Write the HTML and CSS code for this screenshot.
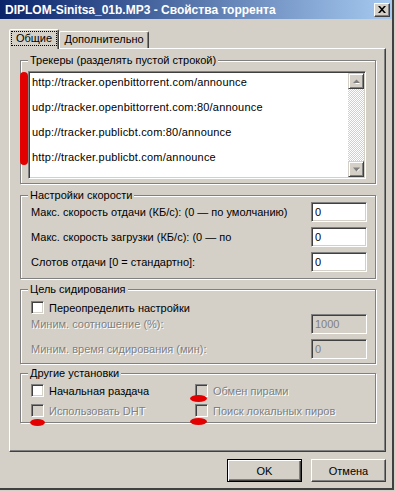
FILE: index.html
```html
<!DOCTYPE html>
<html lang="ru">
<head>
    <meta charset="UTF-8">
    <title>DIPLOM-Sinitsa_01b.MP3 - Свойства торрента</title>
    <link rel="stylesheet" href="styles.css">
</head>
<body>

<div class="window">
    <div class="titlebar">
        <span class="title">DIPLOM-Sinitsa_01b.MP3 - Свойства торрента</span>
        <button class="close">
            <svg width="8" height="7" viewBox="0 0 8 7">
                <path d="M0 0h2l2 2.3L6 0h2L5 3.5 8 7H6L4 4.7 2 7H0l3-3.5z" fill="#000"/>
            </svg>
        </button>
    </div>

    <div class="content">
        <div class="tabs">
            <div class="tab active"><span class="focus">Общие</span></div>
            <div class="tab">Дополнительно</div>
        </div>

        <div class="panel">
            <div class="group trackers">
                <div class="legend">Трекеры (разделять пустой строкой)</div>
                <div class="listbox">
                    <div class="lines">
                        <div class="line">http://tracker.openbittorrent.com/announce</div>
                        <div class="line">udp://tracker.openbittorrent.com:80/announce</div>
                        <div class="line">udp://tracker.publicbt.com:80/announce</div>
                        <div class="line">http://tracker.publicbt.com/announce</div>
                    </div>
                    <div class="scrollbar">
                        <div class="arrow">
                            <svg width="7" height="5" viewBox="0 0 7 5"><path d="M1 4h5L3.5 1.5z" fill="#fff" transform="translate(1 1)"/><path d="M0 4h7L3.5 0.5z" fill="#808080"/></svg>
                        </div>
                        <div class="track"></div>
                        <div class="arrow">
                            <svg width="7" height="5" viewBox="0 0 7 5"><path d="M1 1h5L3.5 3.5z" fill="#fff" transform="translate(1 1)"/><path d="M0 0.5h7L3.5 4.5z" fill="#808080"/></svg>
                        </div>
                    </div>
                </div>
            </div>

            <div class="group speed">
                <div class="legend">Настройки скорости</div>
                <div class="row">
                    <span>Макс. скорость отдачи (КБ/с): (0 — по умолчанию)</span>
                    <input class="field" type="text" value="0">
                </div>
                <div class="row">
                    <span>Макс. скорость загрузки (КБ/с): (0 — по</span>
                    <input class="field" type="text" value="0">
                </div>
                <div class="row">
                    <span>Слотов отдачи [0 = стандартно]:</span>
                    <input class="field" type="text" value="0">
                </div>
            </div>

            <div class="group seeding">
                <div class="legend">Цель сидирования</div>
                <div class="check-row first">
                    <span class="check"></span>
                    <span>Переопределить настройки</span>
                </div>
                <div class="row tight">
                    <span class="disabled">Миним. соотношение (%):</span>
                    <input class="field off" type="text" value="1000" disabled>
                </div>
                <div class="row">
                    <span class="disabled">Миним. время сидирования (мин):</span>
                    <input class="field off" type="text" value="0" disabled>
                </div>
            </div>

            <div class="group other">
                <div class="legend">Другие установки</div>
                <div class="options">
                    <div class="check-row">
                        <span class="check"></span>
                        <span>Начальная раздача</span>
                    </div>
                    <div class="check-row">
                        <span class="check off"></span>
                        <span class="disabled">Обмен пирами</span>
                    </div>
                    <div class="check-row">
                        <span class="check off"></span>
                        <span class="disabled">Использовать DHT</span>
                    </div>
                    <div class="check-row">
                        <span class="check off"></span>
                        <span class="disabled">Поиск локальных пиров</span>
                    </div>
                </div>
            </div>
        </div>

        <div class="buttons">
            <button class="btn default">OK</button>
            <button class="btn">Отмена</button>
        </div>
    </div>

    <!-- red marker scribbles over the screenshot -->
    <div class="mark mark-bar"></div>
    <div class="mark mark-dht"></div>
    <div class="mark mark-peers"></div>
    <div class="mark mark-local"></div>
</div>

</body>
</html>
```

FILE: styles.css
```css
* {
    box-sizing: border-box;
}

body {
    margin: 0;
    background-color: #d4d0c8;
    font: 11px "Liberation Sans", Arial, sans-serif;
    color: #000;
}

.window {
    position: relative;
    width: 394px;
    height: 490px;
    border-right: 2px solid #404040;
    border-bottom: 2px solid #404040;
}

.titlebar {
    display: flex;
    justify-content: space-between;
    align-items: center;
    height: 19px;
    padding: 0 2px 0 5px;
    background: linear-gradient(to right, #0a246a, #a6caf0);
}

.title {
    color: #fff;
    font-size: 12px;
    font-weight: bold;
    white-space: nowrap;
}

.close {
    display: flex;
    justify-content: center;
    align-items: center;
    width: 16px;
    height: 14px;
    padding: 0;
    background-color: #d4d0c8;
    border: 1px solid;
    border-color: #fff #404040 #404040 #fff;
    box-shadow: inset -1px -1px 0 #808080;
}

.content {
    padding: 10px 0 0 9px;
}

/* tabs */
.tabs {
    display: flex;
    align-items: flex-end;
    height: 19px;
}

.tab {
    width: 90px;
    height: 17px;
    border: 1px solid;
    border-bottom: 0;
    border-color: #fff #404040 transparent #fff;
    border-radius: 2px 2px 0 0;
    box-shadow: inset -1px 0 0 #808080;
    text-align: center;
    line-height: 15px;
}

.tab.active {
    position: relative;
    z-index: 1;
    width: 50px;
    height: 20px;
    margin-bottom: -1px;
    padding-top: 1px;
    background-color: #d4d0c8;
}

.focus {
    display: inline-block;
    padding: 0 4px;
    border: 1px dotted #000;
    line-height: 13px;
}

.panel {
    width: 377px;
    height: 404px;
    padding: 0 9px 0 10px;
    border: 1px solid;
    border-color: #fff #404040 #404040 #fff;
    box-shadow: inset -1px -1px 0 #808080;
}

/* group boxes */
.group {
    padding: 0 8px 0 10px;
    border: 1px solid #808080;
    box-shadow: inset 1px 1px 0 #fff, 1px 1px 0 #fff;
}

.legend {
    width: fit-content;
    margin: -7px 0 0 -3px;
    padding: 0 2px;
    background-color: #d4d0c8;
    line-height: 13px;
}

.trackers {
    margin-top: 11px;
    padding-bottom: 4px;
}

.speed {
    margin-top: 11px;
    padding-bottom: 6px;
}

.seeding {
    margin-top: 10px;
    padding-bottom: 4px;
}

.other {
    margin-top: 9px;
    padding-bottom: 5px;
}

.listbox {
    display: flex;
    width: 338px;
    height: 108px;
    margin: 4px 0 0 -3px;
    border: 1px solid;
    border-color: #808080 #fff #fff #808080;
    box-shadow: inset 1px 1px 0 #404040, inset -1px -1px 0 #d4d0c8;
    background-color: #fff;
    padding: 1px;
}

.lines {
    flex: 1;
    padding: 3px 0 0 2px;
}

.line {
    line-height: 13px;
    margin-bottom: 12px;
    letter-spacing: 0.2px;
    white-space: nowrap;
}

.scrollbar {
    display: flex;
    flex-direction: column;
    width: 16px;
}

.arrow {
    display: flex;
    justify-content: center;
    align-items: center;
    height: 16px;
    background-color: #d4d0c8;
    border: 1px solid;
    border-color: #d4d0c8 #404040 #404040 #d4d0c8;
    box-shadow: inset 1px 1px 0 #fff, inset -1px -1px 0 #808080;
}

.track {
    flex: 1;
    background: repeating-conic-gradient(#fff 0 25%, #d4d0c8 0 50%) 0 0 / 2px 2px;
}

.row {
    display: flex;
    justify-content: space-between;
    align-items: center;
    height: 20px;
    white-space: nowrap;
}

.row + .row {
    margin-top: 5px;
}

.row.tight {
    margin-top: 0;
}

.field {
    width: 56px;
    height: 20px;
    padding: 0 3px;
    font: inherit;
    color: #000;
    border: 1px solid;
    border-color: #808080 #fff #fff #808080;
    box-shadow: inset 1px 1px 0 #404040, inset -1px -1px 0 #d4d0c8;
    background-color: #fff;
    outline: none;
}

.field.off {
    color: #808080;
    background-color: #d4d0c8;
}

.disabled {
    color: #808080;
    text-shadow: 1px 1px 0 #fff;
}

/* checkboxes */
.check-row {
    display: flex;
    align-items: center;
    gap: 5px;
    height: 13px;
    white-space: nowrap;
}

.check-row.first {
    margin-top: 5px;
}

.check {
    flex: none;
    width: 13px;
    height: 13px;
    border: 1px solid;
    border-color: #808080 #fff #fff #808080;
    box-shadow: inset 1px 1px 0 #404040, inset -1px -1px 0 #d4d0c8;
    background-color: #fff;
}

.check.off {
    background-color: #d4d0c8;
}

.options {
    display: grid;
    grid-template-columns: 164px auto;
    row-gap: 7px;
    margin-top: 4px;
}

/* buttons */
.buttons {
    display: flex;
    justify-content: flex-end;
    gap: 9px;
    width: 377px;
    margin-top: 7px;
}

.btn {
    width: 75px;
    height: 23px;
    padding: 0;
    font: inherit;
    color: #000;
    background-color: #d4d0c8;
    border: 1px solid;
    border-color: #fff #404040 #404040 #fff;
    box-shadow: inset -1px -1px 0 #808080;
}

.btn.default {
    border-color: #000;
    box-shadow: inset 1px 1px 0 #fff, inset -1px -1px 0 #404040, inset -2px -2px 0 #808080;
}

/* red marks */
.mark {
    position: absolute;
    background-color: #e30000;
    border-radius: 50%;
    filter: blur(0.6px);
}

.mark-bar {
    left: 20px;
    top: 72px;
    width: 8px;
    height: 93px;
    border-radius: 4px;
}

.mark-dht {
    left: 30px;
    top: 419px;
    width: 15px;
    height: 7px;
}

.mark-peers {
    left: 190px;
    top: 395px;
    width: 17px;
    height: 7px;
}

.mark-local {
    left: 190px;
    top: 418px;
    width: 17px;
    height: 7px;
}
```
